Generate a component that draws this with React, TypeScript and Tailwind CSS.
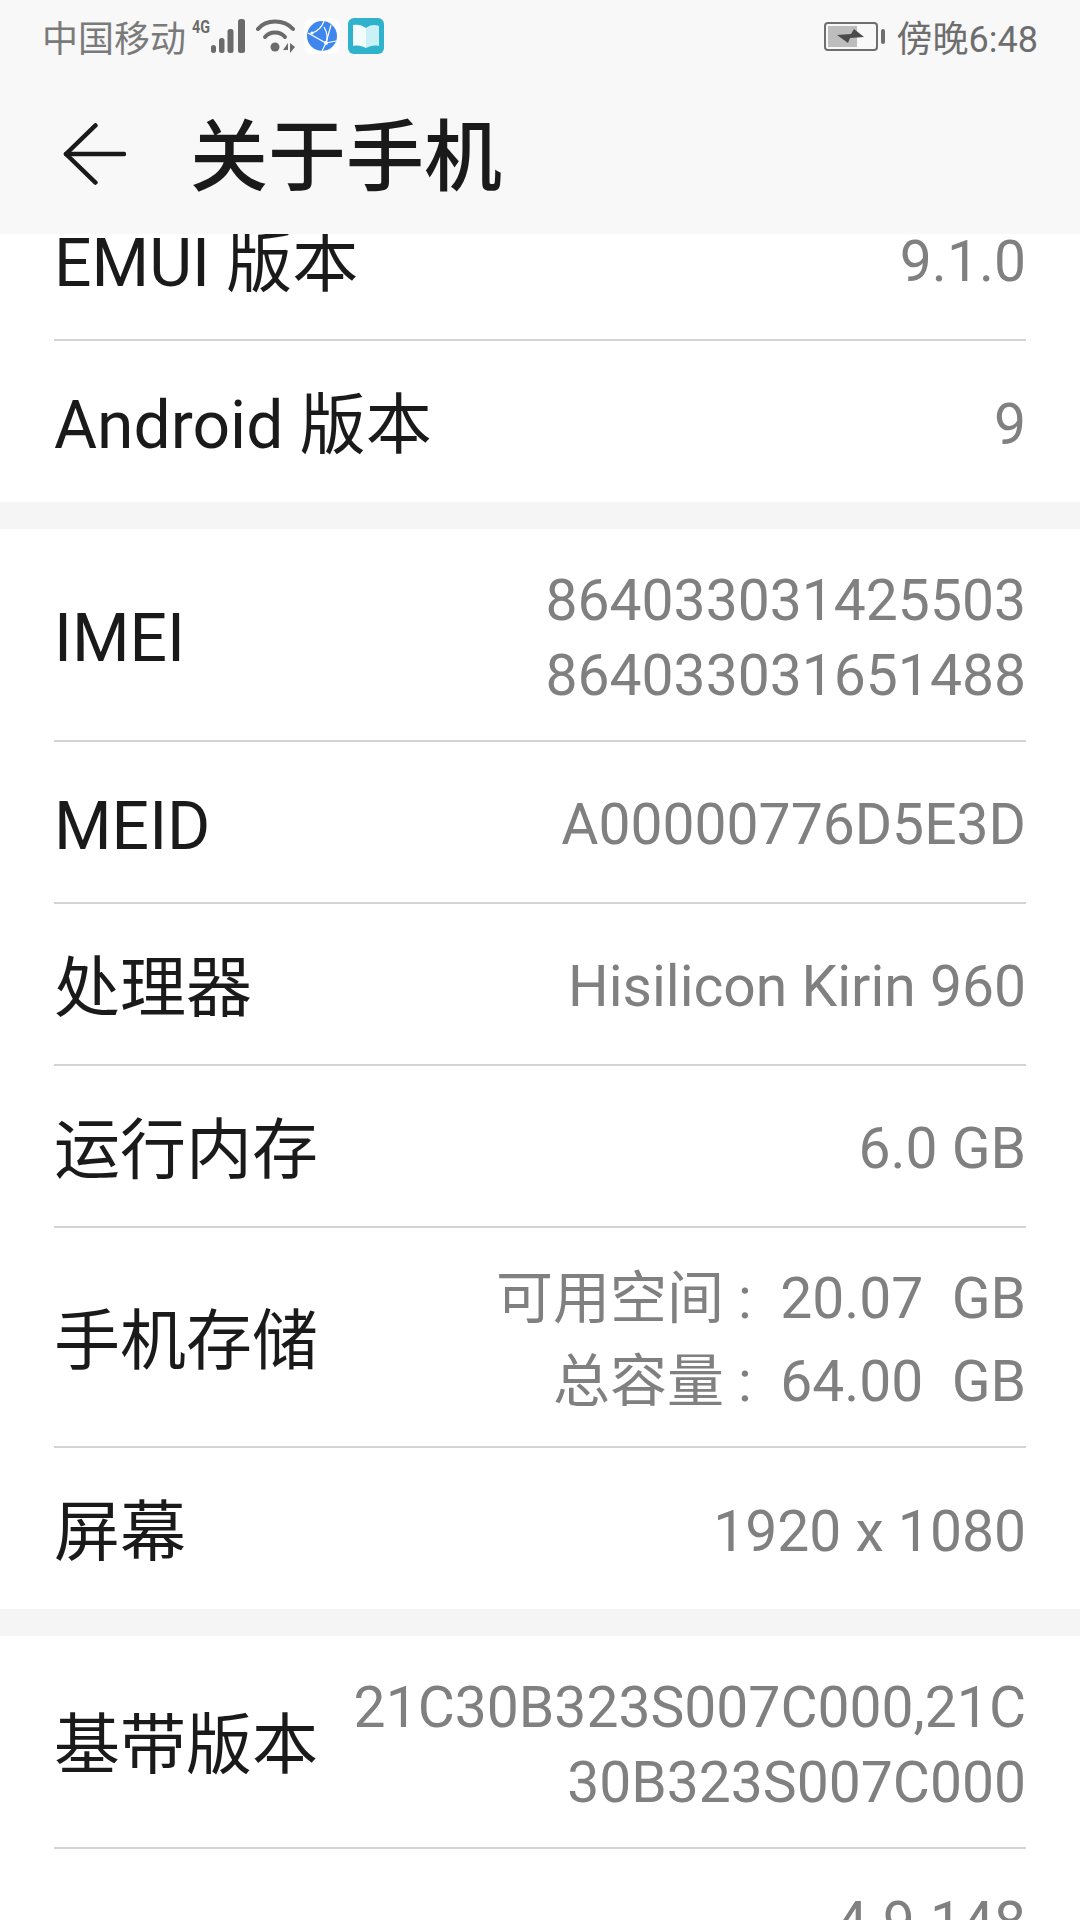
const FONT = "font-['Roboto','Noto_Sans_CJK_SC',sans-serif]";

function SignalIcon() {
  return (
    <svg width="54" height="36" viewBox="0 0 54 36" className="text-[#6b6b6b]">
      <text x="0" y="15" fontSize="19" fontWeight="700" fill="currentColor" fontFamily="Roboto, sans-serif" textLength="18" lengthAdjust="spacingAndGlyphs">
        4G
      </text>
      <g fill="currentColor">
        <rect x="19" y="27" width="5" height="8" rx="2.5" />
        <rect x="27" y="20" width="5.5" height="15" rx="2.5" />
        <rect x="35.5" y="11" width="6" height="24" rx="2.5" />
        <rect x="46" y="1" width="7" height="34" rx="2.5" />
      </g>
    </svg>
  );
}

function WifiIcon() {
  return (
    <svg width="40" height="36" viewBox="0 0 40 36" className="text-[#6b6b6b]">
      <g fill="none" stroke="currentColor" strokeWidth="4" strokeLinecap="round">
        <path d="M2 11 C10 1 28 1 37 11" />
        <path d="M9 19 C14 13 24 13 29 19" />
      </g>
      <circle cx="19" cy="29" r="4.5" fill="currentColor" />
      <path d="M27 32 L32 25 V32 Z M34 25 L39 29 L34 35 Z" fill="currentColor" />
    </svg>
  );
}

function BrowserIcon() {
  return (
    <svg width="36" height="36" viewBox="0 0 36 36">
      <rect width="36" height="36" rx="8" fill="#ffffff" />
      <circle cx="18" cy="18" r="15" fill="#3e87ee" />
      <g fill="none" stroke="#ffffff" strokeWidth="1.2">
        <path d="M4 15 L22 25 L27 7" />
        <path d="M8 15 C14 13 18 9 20 3" />
        <path d="M20 9 C23 14 24 20 22 25 L18 33" />
        <path d="M22 25 L32 23" />
      </g>
      <circle cx="22" cy="25" r="2" fill="#ffffff" />
      <circle cx="8" cy="15" r="1.6" fill="#ffffff" />
    </svg>
  );
}

function BookIcon() {
  return (
    <svg width="36" height="36" viewBox="0 0 36 36">
      <rect width="36" height="36" rx="6" fill="#2fb3cd" />
      <path d="M5 7 C10 6 14 7 18 10 V30 C14 28 10 27 5 28 Z" fill="#f4fdfe" />
      <path d="M18 10 C22 7 26 6 31 8 V28 C26 27 22 28 18 30 Z" fill="#c9f1f6" />
    </svg>
  );
}

function BatteryIcon() {
  return (
    <div className="flex items-center gap-[3px]">
      <div className="flex h-[29px] w-[54px] items-center rounded-[4px] border-2 border-[#6e6e6e] p-[2px]">
        <div className="relative h-full w-[29px] bg-[#bdbdbd]">
          <svg width="28" height="14" viewBox="0 0 28 14" className="absolute left-[9px] top-[3px]">
            <path d="M0 6 L14 5 L17 0 L27 8 L13 9 L11 14 Z" fill="#4a4a4a" />
          </svg>
        </div>
      </div>
      <div className="h-[15px] w-[4px] rounded-sm bg-[#6e6e6e]" />
    </div>
  );
}

function Row({ label, children, last, className }: { label: string; children: React.ReactNode; last?: boolean; className?: string }) {
  return (
    <div className={`flex items-center justify-between pt-[6px] ${last ? "" : "border-b-2 border-[#d3d3d3]"} ${className ?? "h-[162px]"}`}>
      <span className="mt-[3px] whitespace-nowrap text-[66px] leading-none text-[#1a1a1a]">{label}</span>
      <div className="text-right text-[57px] text-[#808080]">{children}</div>
    </div>
  );
}

export default function App() {
  return (
    <div className={`flex h-[1920px] w-[1080px] flex-col overflow-hidden bg-white ${FONT}`}>
      <header className="z-10 h-[234px] shrink-0 bg-[#f8f8f8]">
        <div className="flex h-[72px] items-center justify-between pl-[42px] pr-[42px]">
          <div className="flex items-center">
            <span className="pt-[7px] text-[36px] leading-none text-[#7a7a7a]">中国移动</span>
            <div className="ml-[6px]"><SignalIcon /></div>
            <div className="ml-[10px]"><WifiIcon /></div>
            <div className="ml-[8px]"><BrowserIcon /></div>
            <div className="ml-[8px]"><BookIcon /></div>
          </div>
          <div className="flex items-center gap-[12px]">
            <BatteryIcon />
            <span className="pt-[7px] text-[36px] leading-none text-[#6e6e6e]">傍晚6:48</span>
          </div>
        </div>
        <div className="flex h-[162px] items-center pl-[63px]">
          <svg width="63" height="64" viewBox="0 0 64 64" fill="none" stroke="#1a1a1a" strokeWidth="4.5" strokeLinecap="round" strokeLinejoin="round" className="mt-[2px]">
            <path d="M33 3 L3 32 L33 61" />
            <path d="M3 32 H62" />
          </svg>
          <h1 className="ml-[64px] mt-[12px] text-[78px] font-medium leading-none text-[#1a1a1a]">关于手机</h1>
        </div>
      </header>

      <main className="min-h-0 flex-1 overflow-hidden">
        <div className="-mt-[55px] flex flex-col">
          <section className="px-[54px]">
            <Row label="EMUI 版本">9.1.0</Row>
            <Row label="Android 版本" last className="h-[161px]">9</Row>
          </section>
          <div className="h-[27px] bg-[#f5f5f5]" />
          <section className="px-[54px]">
            <Row label="IMEI" className="h-[213px]">
              <p className="leading-[75px]">864033031425503</p>
              <p className="leading-[75px]">864033031651488</p>
            </Row>
            <Row label="MEID">A00000776D5E3D</Row>
            <Row label="处理器">Hisilicon Kirin 960</Row>
            <Row label="运行内存">6.0 GB</Row>
            <Row label="手机存储" className="h-[220px]">
              <p className="whitespace-pre leading-[83px]">可用空间 :  20.07  GB</p>
              <p className="whitespace-pre leading-[83px]">总容量 :  64.00  GB</p>
            </Row>
            <Row label="屏幕" last className="h-[161px]">1920 x 1080</Row>
          </section>
          <div className="h-[27px] bg-[#f5f5f5]" />
          <section className="px-[54px]">
            <Row label="基带版本" className="h-[213px]">
              <p className="leading-[75px]">21C30B323S007C000,21C</p>
              <p className="leading-[75px]">30B323S007C000</p>
            </Row>
            <div className="pt-[36px] text-right text-[57px] leading-[75px] text-[#808080]">4.9.148</div>
          </section>
        </div>
      </main>
    </div>
  );
}
